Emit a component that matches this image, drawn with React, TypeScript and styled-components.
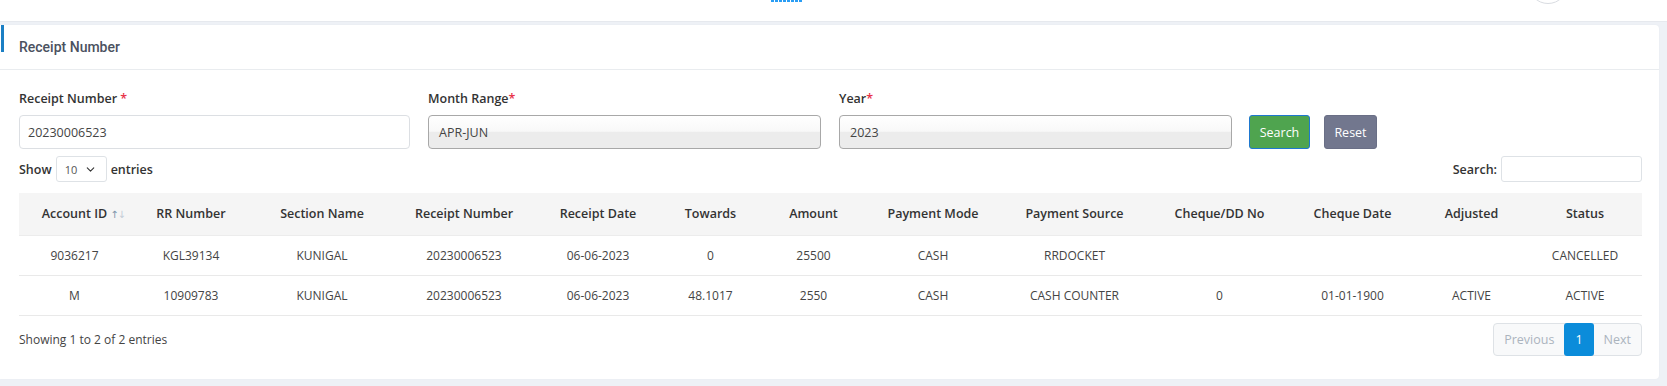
import React from 'react';
import styled, { createGlobalStyle } from 'styled-components';
import { ChevronDown } from 'lucide-react';

const GlobalStyle = createGlobalStyle`
  html, body {
    margin: 0;
    padding: 0;
    background: #eef1f6;
    font-family: "Open Sans", "Noto Sans", sans-serif;
    color: #333;
  }
  * { box-sizing: border-box; }
`;

const Page = styled.div`
  min-height: 386px;
  display: flex;
  flex-direction: column;
`;

const TopBar = styled.div`
  height: 22px;
  background: #fff;
  display: flex;
  align-items: flex-start;
  overflow: hidden;
  border-bottom: 1px solid #e6e9ee;
`;

const Logo = styled.svg`
  margin-left: 771px;
  display: block;
`;

const Avatar = styled.div`
  margin-left: auto;
  margin-right: 99px;
  margin-top: -36px;
  width: 40px;
  height: 40px;
  border-radius: 50%;
  border: 1px solid #d9dce1;
  background: #fff;
  flex-shrink: 0;
`;

const Main = styled.div`
  padding: 3px 8px 6px 0;
`;

const Card = styled.div`
  background: #fff;
  border-radius: 0 4px 4px 0;
  box-shadow: 0 0 2px rgba(0, 0, 0, 0.04);
`;

const CardHeader = styled.div`
  position: relative;
  height: 45px;
  display: flex;
  align-items: center;
  padding-left: 19px;
  border-bottom: 1px solid #e9ecef;
  font-family: Roboto, "Open Sans", sans-serif;
  font-size: 14px;
  font-weight: 500;
  color: #4b5160;

  &::before {
    content: '';
    position: absolute;
    left: 1px;
    top: 0;
    width: 3px;
    height: 27px;
    background: #1b7fc4;
  }
`;

const CardBody = styled.div`
  padding: 19px 17px 23px 19px;
`;

const FormRow = styled.div`
  display: grid;
  grid-template-columns: 391px 393px 393px auto;
  column-gap: 18px;
  align-items: end;
`;

const Field = styled.div`
  display: flex;
  flex-direction: column;
`;

const Label = styled.label`
  height: 20px;
  line-height: 20px;
  margin-bottom: 6px;
  font-size: 12.5px;
  font-weight: 600;
  color: #333;
`;

const Req = styled.span`
  color: #e8334a;
`;

const TextInput = styled.div<{ $select?: boolean }>`
  height: 34px;
  display: flex;
  align-items: center;
  padding-left: ${({ $select }) => ($select ? '10px' : '8px')};
  border-radius: 4px;
  font-size: 12.5px;
  color: #444;
  border: 1px solid ${({ $select }) => ($select ? '#a8a8a8' : '#dcdfe3')};
  background: ${({ $select }) =>
    $select
      ? 'linear-gradient(to bottom, #ffffff 0%, #f8f8f8 48%, #ececec 50%, #ececec 100%)'
      : '#fff'};
`;

const Buttons = styled.div`
  display: flex;
  gap: 14px;
  margin-left: -1px;
`;

const Button = styled.button<{ $variant: 'search' | 'reset' }>`
  height: 34px;
  width: ${({ $variant }) => ($variant === 'search' ? '61px' : '53px')};
  padding: 0;
  border-radius: 3px;
  font-family: "Open Sans", sans-serif;
  font-size: 12.5px;
  color: #fff;
  cursor: pointer;
  background: ${({ $variant }) => ($variant === 'search' ? '#4fa44f' : '#72778e')};
  border: 1px solid ${({ $variant }) => ($variant === 'search' ? '#1e78cf' : '#6a6f86')};
`;

const Controls = styled.div`
  margin-top: 7px;
  display: flex;
  align-items: center;
  justify-content: space-between;
  height: 26px;
`;

const ControlGroup = styled.div`
  display: flex;
  align-items: center;
  gap: 4px;
  font-size: 12.5px;
  font-weight: 600;
  color: #333;
`;

const LengthSelect = styled.div`
  width: 51px;
  height: 26px;
  border: 1px solid #dee2e6;
  border-radius: 3px;
  display: flex;
  align-items: center;
  gap: 7px;
  padding-left: 8px;
  font-size: 11px;
  font-weight: 400;
  color: #555;
`;

const SearchBox = styled.div`
  width: 141px;
  height: 26px;
  border: 1px solid #dee2e6;
  border-radius: 3px;
`;

const Table = styled.table`
  margin-top: 11px;
  width: 100%;
  table-layout: fixed;
  border-collapse: collapse;
  font-size: 12px;
`;

const Th = styled.th`
  position: relative;
  height: 42px;
  padding: 0;
  background: #f5f5f5;
  font-weight: 600;
  font-size: 12.5px;
  color: #333;
  text-align: center;
  border-bottom: 1px solid #ececec;
`;

const SortIcon = styled.span`
  position: absolute;
  right: 5px;
  top: 16px;
  font-family: "DejaVu Sans", sans-serif;
  font-size: 10px;
  font-weight: 400;
  letter-spacing: -1px;
  color: #c3ccd6;

  & > span:first-child {
    color: #7d95ab;
  }
`;

const Td = styled.td`
  height: 40px;
  padding: 0;
  text-align: center;
  color: #444;
  border-bottom: 1px solid #e9e9e9;
`;

const Footer = styled.div`
  margin-top: 7px;
  display: flex;
  align-items: center;
  justify-content: space-between;
`;

const Info = styled.div`
  font-size: 12px;
  color: #444;
`;

const Pager = styled.div`
  display: flex;
  height: 33px;
  border: 1px solid #dee2e6;
  border-radius: 4px;
  background: #f8f9fa;
`;

const PageBtn = styled.div<{ $active?: boolean }>`
  display: flex;
  align-items: center;
  justify-content: center;
  padding: 0 ${({ $active }) => ($active ? '11px' : '10px')};
  margin: ${({ $active }) => ($active ? '-1px 0' : '0')};
  border-radius: ${({ $active }) => ($active ? '3px' : '0')};
  font-size: 12.5px;
  color: ${({ $active }) => ($active ? '#fff' : '#abb4be')};
  background: ${({ $active }) => ($active ? '#0b8cda' : 'transparent')};
`;

const columns = [
  { title: 'Account ID', width: 111, sort: true },
  { title: 'RR Number', width: 122 },
  { title: 'Section Name', width: 140 },
  { title: 'Receipt Number', width: 144 },
  { title: 'Receipt Date', width: 124 },
  { title: 'Towards', width: 101 },
  { title: 'Amount', width: 105 },
  { title: 'Payment Mode', width: 134 },
  { title: 'Payment Source', width: 149 },
  { title: 'Cheque/DD No', width: 141 },
  { title: 'Cheque Date', width: 125 },
  { title: 'Adjusted', width: 113 },
  { title: 'Status', width: 114 },
];

const rows = [
  ['9036217', 'KGL39134', 'KUNIGAL', '20230006523', '06-06-2023', '0', '25500', 'CASH', 'RRDOCKET', '', '', '', 'CANCELLED'],
  ['M', '10909783', 'KUNIGAL', '20230006523', '06-06-2023', '48.1017', '2550', 'CASH', 'CASH COUNTER', '0', '01-01-1900', 'ACTIVE', 'ACTIVE'],
];

export default function App() {
  return (
    <Page>
      <GlobalStyle />
      <TopBar>
        {/* bottom edge of the logo image, cut off by the viewport */}
        <Logo width="32" height="3" viewBox="0 0 32 3">
          {[0, 4, 8, 12, 16, 20, 24, 28].map((x) => (
            <rect key={x} x={x} y="0" width="3" height="2" fill="#2a9df4" />
          ))}
        </Logo>
        <Avatar />
      </TopBar>
      <Main>
        <Card>
          <CardHeader>Receipt Number</CardHeader>
          <CardBody>
            <FormRow>
              <Field>
                <Label>
                  Receipt Number <Req>*</Req>
                </Label>
                <TextInput>20230006523</TextInput>
              </Field>
              <Field>
                <Label>
                  Month Range<Req>*</Req>
                </Label>
                <TextInput $select>APR-JUN</TextInput>
              </Field>
              <Field>
                <Label>
                  Year<Req>*</Req>
                </Label>
                <TextInput $select>2023</TextInput>
              </Field>
              <Buttons>
                <Button $variant="search">Search</Button>
                <Button $variant="reset">Reset</Button>
              </Buttons>
            </FormRow>

            <Controls>
              <ControlGroup>
                Show
                <LengthSelect>
                  10 <ChevronDown size={13} strokeWidth={2} color="#333" />
                </LengthSelect>
                entries
              </ControlGroup>
              <ControlGroup>
                Search:
                <SearchBox />
              </ControlGroup>
            </Controls>

            <Table>
              <colgroup>
                {columns.map((c) => (
                  <col key={c.title} style={{ width: c.width }} />
                ))}
              </colgroup>
              <thead>
                <tr>
                  {columns.map((c) => (
                    <Th key={c.title}>
                      {c.title}
                      {c.sort && (
                        <SortIcon>
                          <span>↑</span>
                          <span>↓</span>
                        </SortIcon>
                      )}
                    </Th>
                  ))}
                </tr>
              </thead>
              <tbody>
                {rows.map((r, i) => (
                  <tr key={i}>
                    {r.map((v, j) => (
                      <Td key={j}>{v}</Td>
                    ))}
                  </tr>
                ))}
              </tbody>
            </Table>

            <Footer>
              <Info>Showing 1 to 2 of 2 entries</Info>
              <Pager>
                <PageBtn>Previous</PageBtn>
                <PageBtn $active>1</PageBtn>
                <PageBtn>Next</PageBtn>
              </Pager>
            </Footer>
          </CardBody>
        </Card>
      </Main>
    </Page>
  );
}
